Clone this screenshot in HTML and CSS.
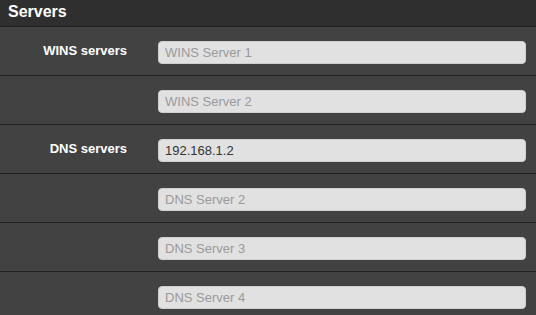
FILE: index.html
```html
<!DOCTYPE html>
<html>
<head>
<meta charset="utf-8">
<link rel="stylesheet" href="styles.css">
</head>
<body>
<div class="panel">
  <div class="panel-heading">Servers</div>
  <div class="row">
    <label class="label">WINS servers</label>
    <div class="field"><input class="input" type="text" placeholder="WINS Server 1"></div>
  </div>
  <div class="row">
    <div class="label"></div>
    <div class="field"><input class="input" type="text" placeholder="WINS Server 2"></div>
  </div>
  <div class="row">
    <label class="label">DNS servers</label>
    <div class="field"><input class="input" type="text" value="192.168.1.2" placeholder="DNS Server 1"></div>
  </div>
  <div class="row">
    <div class="label"></div>
    <div class="field"><input class="input" type="text" placeholder="DNS Server 2"></div>
  </div>
  <div class="row">
    <div class="label"></div>
    <div class="field"><input class="input" type="text" placeholder="DNS Server 3"></div>
  </div>
  <div class="row">
    <div class="label"></div>
    <div class="field"><input class="input" type="text" placeholder="DNS Server 4"></div>
  </div>
</div>
</body>
</html>
```
FILE: styles.css
```css
html, body {
  margin: 0;
  padding: 0;
  background: #424242;
  font-family: "Liberation Sans", Arial, sans-serif;
}
.panel {
  width: 536px;
}
.panel-heading {
  height: 27px;
  box-sizing: border-box;
  padding: 2px 8px 0;
  background: #2f2f2f;
  color: #ffffff;
  font-size: 16px;
  font-weight: bold;
  line-height: 20px;
  border-bottom: 1px solid #1e1e1e;
}
.row {
  display: grid;
  grid-template-columns: 143px 1fr;
  height: 49px;
  box-sizing: border-box;
  border-bottom: 1px solid #222222;
  background: #424242;
}
.label {
  text-align: right;
  padding: 16px 16px 0 0;
  color: #ffffff;
  font-size: 13px;
  font-weight: bold;
  line-height: 15px;
}
.field {
  padding: 14px 10px 0 15px;
}
.input {
  display: block;
  width: 100%;
  box-sizing: border-box;
  height: 23px;
  margin: 0;
  padding: 0 6px;
  border: 1px solid #cfcfcf;
  border-radius: 4px;
  background: #e1e1e1;
  color: #333333;
  font-family: "Liberation Sans", Arial, sans-serif;
  font-size: 13px;
  outline: none;
}
.input::placeholder {
  color: #9a9a9a;
  opacity: 1;
}
```
